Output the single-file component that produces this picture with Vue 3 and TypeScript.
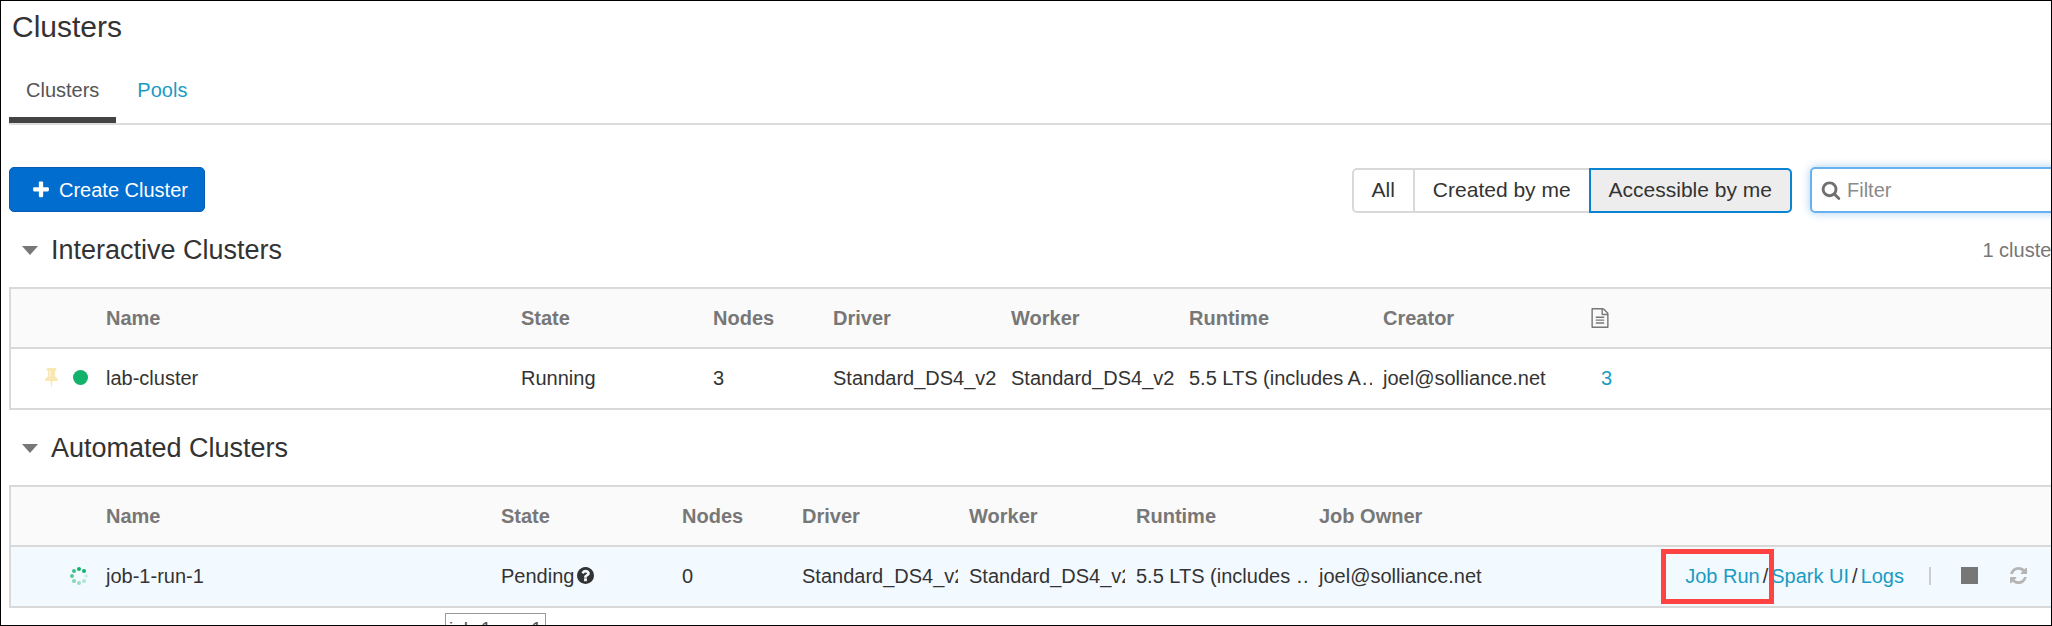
<script setup lang="ts">
import { ref } from 'vue'

interface Cluster {
  name: string
  state: string
  nodes: number
  driver: string
  worker: string
  runtime: string
  owner: string
}

const filters = ['All', 'Created by me', 'Accessible by me']
const activeFilter = ref('Accessible by me')
const query = ref('')

const interactiveHeads = ['Name', 'State', 'Nodes', 'Driver', 'Worker', 'Runtime', 'Creator']
const automatedHeads = ['Name', 'State', 'Nodes', 'Driver', 'Worker', 'Runtime', 'Job Owner']

const interactive: Cluster[] = [
  {
    name: 'lab-cluster',
    state: 'Running',
    nodes: 3,
    driver: 'Standard_DS4_v2',
    worker: 'Standard_DS4_v2',
    runtime: '5.5 LTS (includes A…',
    owner: 'joel@solliance.net',
  },
]

const automated: Cluster[] = [
  {
    name: 'job-1-run-1',
    state: 'Pending',
    nodes: 0,
    driver: 'Standard_DS4_v2',
    worker: 'Standard_DS4_v2',
    runtime: '5.5 LTS (includes …',
    owner: 'joel@solliance.net',
  },
]

const dots = [
  { x: 9, y: 2, o: 1 },
  { x: 14, y: 4, o: 1 },
  { x: 16, y: 9, o: 0.15 },
  { x: 14, y: 14, o: 0.3 },
  { x: 9, y: 16, o: 0.4 },
  { x: 4, y: 14, o: 0.5 },
  { x: 2, y: 9, o: 0.7 },
  { x: 4, y: 4, o: 0.8 },
]
</script>

<template>
  <div class="frame">
    <main class="content">
      <h1>Clusters</h1>

      <nav class="tabs">
        <a href="#clusters" class="tab current">Clusters</a>
        <a href="#pools" class="tab">Pools</a>
      </nav>

      <div class="toolbar">
        <button type="button" class="create">
          <svg viewBox="0 0 1792 1792" width="20" height="20" aria-hidden="true"><path d="M1600 736v192q0 40-28 68t-68 28h-416v416q0 40-28 68t-68 28h-192q-40 0-68-28t-28-68v-416h-416q-40 0-68-28t-28-68v-192q0-40 28-68t68-28h416v-416q0-40 28-68t68-28h192q40 0 68 28t28 68v416h416q40 0 68 28t28 68z" /></svg>
          Create Cluster
        </button>
        <div class="segments">
          <button
            v-for="f in filters"
            :key="f"
            type="button"
            class="segment"
            :class="{ active: f === activeFilter }"
            @click="activeFilter = f"
          >{{ f }}</button>
        </div>
        <label class="search">
          <svg viewBox="0 0 1792 1792" width="20" height="20" aria-hidden="true"><path d="M1216 832q0-185-131.5-316.5t-316.5-131.5-316.5 131.5-131.5 316.5 131.5 316.5 316.5 131.5 316.5-131.5 131.5-316.5zm512 832q0 52-38 90t-90 38q-54 0-90-38l-343-342q-179 124-399 124-143 0-273.5-55.5t-225-150-150-225-55.5-273.5 55.5-273.5 150-225 225-150 273.5-55.5 273.5 55.5 225 150 150 225 55.5 273.5q0 220-124 399l343 343q37 37 37 90z" /></svg>
          <input v-model="query" type="text" placeholder="Filter" aria-label="Filter" />
        </label>
      </div>

      <section>
        <div class="section-head">
          <h2><svg class="caret" viewBox="0 0 16 9" width="16" height="9" aria-hidden="true"><path d="M0 0h16L8 9z" /></svg>Interactive Clusters</h2>
          <span class="count">1 cluster</span>
        </div>
        <table class="interactive">
          <colgroup>
            <col class="c-icons" /><col class="c-name" /><col class="c-state" /><col class="c-nodes" />
            <col class="c-type" /><col class="c-type" /><col class="c-runtime" /><col class="c-owner" /><col />
          </colgroup>
          <thead>
            <tr>
              <td></td>
              <th v-for="h in interactiveHeads" :key="h" scope="col">{{ h }}</th>
              <th scope="col" aria-label="Notebooks" class="doc">
                <svg viewBox="0 0 1792 1792" width="20" height="20" aria-hidden="true"><path d="M1596 380q28 28 48 76t20 88v1152q0 40-28 68t-68 28h-1344q-40 0-68-28t-28-68v-1600q0-40 28-68t68-28h896q40 0 88 20t76 48zm-444-244v376h376q-10-29-22-41l-313-313q-12-12-41-22zm384 1528v-1024h-416q-40 0-68-28t-28-68v-416h-768v1536h1280zm-1024-864q0-14 9-23t23-9h704q14 0 23 9t9 23v64q0 14-9 23t-23 9h-704q-14 0-23-9t-9-23v-64zm736 224q14 0 23 9t9 23v64q0 14-9 23t-23 9h-704q-14 0-23-9t-9-23v-64q0-14 9-23t23-9h704zm0 256q14 0 23 9t9 23v64q0 14-9 23t-23 9h-704q-14 0-23-9t-9-23v-64q0-14 9-23t23-9h704z" /></svg>
              </th>
            </tr>
          </thead>
          <tbody>
            <tr v-for="c in interactive" :key="c.name">
              <td>
                <span class="icons">
                  <svg class="pin" viewBox="320 128 1152 1664" width="13" height="19" aria-hidden="true"><path d="M800 864v-448q0-14-9-23t-23-9-23 9-9 23v448q0 14 9 23t23 9 23-9 9-23zm672 352q0 26-19 45t-45 19h-429l-51 483q-2 12-10.5 20.5t-20.5 8.5h-1q-27 0-32-27l-76-485h-404q-26 0-45-19t-19-45q0-123 78.5-221.5t177.5-98.5v-512q-52 0-90-38t-38-90 38-90 90-38h640q52 0 90 38t38 90-38 90-90 38v512q99 0 177.5 98.5t78.5 221.5z" /></svg>
                  <i class="dot"></i>
                </span>
              </td>
              <td>{{ c.name }}</td>
              <td>{{ c.state }}</td>
              <td>{{ c.nodes }}</td>
              <td>{{ c.driver }}</td>
              <td>{{ c.worker }}</td>
              <td>{{ c.runtime }}</td>
              <td>{{ c.owner }}</td>
              <td class="notebooks"><a href="#notebooks">3</a></td>
            </tr>
          </tbody>
        </table>
      </section>

      <section>
        <div class="section-head">
          <h2><svg class="caret" viewBox="0 0 16 9" width="16" height="9" aria-hidden="true"><path d="M0 0h16L8 9z" /></svg>Automated Clusters</h2>
        </div>
        <table class="automated">
          <colgroup>
            <col class="c-icons" /><col class="c-name" /><col class="c-state" /><col class="c-nodes" />
            <col class="c-type" /><col class="c-type" /><col class="c-runtime" /><col class="c-owner" /><col />
          </colgroup>
          <thead>
            <tr>
              <td></td>
              <th v-for="h in automatedHeads" :key="h" scope="col">{{ h }}</th>
              <td></td>
            </tr>
          </thead>
          <tbody>
            <tr v-for="c in automated" :key="c.name" class="hovered">
              <td>
                <span class="icons">
                  <svg class="spinner" viewBox="0 0 18 18" width="18" height="18" role="img" aria-label="Pending">
                    <circle v-for="(d, i) in dots" :key="i" :cx="d.x" :cy="d.y" r="2" :opacity="d.o" />
                  </svg>
                </span>
              </td>
              <td>{{ c.name }}</td>
              <td>
                <span class="state">{{ c.state }}<svg viewBox="128 128 1536 1536" width="17" height="17" aria-hidden="true"><path d="M1024 1376v-192q0-14-9-23t-23-9h-192q-14 0-23 9t-9 23v192q0 14 9 23t23 9h192q14 0 23-9t9-23zm256-672q0-88-55.5-163t-138.5-116-170-41q-243 0-371 213-15 24 8 42l132 100q7 6 19 6 16 0 25-12 53-68 86-92 34-24 86-24 48 0 85.5 26t37.5 59q0 38-20 61t-68 45q-63 28-115.5 86.5t-52.5 125.5v36q0 14 9 23t23 9h192q14 0 23-9t9-23q0-19 21.5-49.5t54.5-49.5q32-18 49-28.5t46-35 44.5-48 28-60.5 12.5-81zm384 192q0 209-103 385.5t-279.5 279.5-385.5 103-385.5-103-279.5-279.5-103-385.5 103-385.5 279.5-279.5 385.5-103 385.5 103 279.5 279.5 103 385.5z" /></svg></span>
              </td>
              <td>{{ c.nodes }}</td>
              <td>{{ c.driver }}</td>
              <td>{{ c.worker }}</td>
              <td>{{ c.runtime }}</td>
              <td>{{ c.owner }}</td>
              <td class="action-cell">
                <div class="actions">
                  <span class="links">
                    <a href="#job-run" class="marked">Job Run</a><span>/</span><a href="#spark-ui">Spark UI</a><span>/</span><a href="#logs">Logs</a>
                  </span>
                  <span class="bar"></span>
                  <button type="button" class="icon-button" aria-label="Terminate"><i class="stop"></i></button>
                  <button type="button" class="icon-button restart" aria-label="Restart">
                    <svg viewBox="128 128 1536 1536" width="17" height="17" aria-hidden="true"><path d="M1639 1056q0 5-1 7-64 268-268 434.5t-478 166.5q-146 0-282.5-55t-243.5-157l-129 129q-19 19-45 19t-45-19-19-45v-448q0-26 19-45t45-19h448q26 0 45 19t19 45-19 45l-137 137q71 66 161 102t187 36q134 0 250-65t186-179q11-17 53-117 8-23 30-23h192q13 0 22.5 9.5t9.5 22.5zm25-800v448q0 26-19 45t-45 19h-448q-26 0-45-19t-19-45 19-45l138-138q-148-137-349-137-134 0-250 65t-186 179q-11 17-53 117-8 23-30 23h-199q-13 0-22.5-9.5t-9.5-22.5v-7q65-268 270-434.5t480-166.5q146 0 284 55.5t245 156.5l130-129q19-19 45-19t45 19 19 45z" /></svg>
                  </button>
                </div>
              </td>
            </tr>
          </tbody>
        </table>
        <div class="tooltip" role="tooltip">job-1-run-1</div>
      </section>
    </main>
  </div>
</template>

<style>
body {
  background: #fff;
}
</style>

<style scoped>
* {
  box-sizing: border-box;
}
.frame {
  height: 100vh;
  overflow: hidden;
  border: 1px solid #000;
  color: #333;
  font: 20px/24px "Liberation Sans", Arial, sans-serif;
}
.content {
  margin: 0 -9px 0 8px;
}
h1,
h2 {
  margin: 0;
  font-weight: 400;
}
h1 {
  padding: 8px 0 0 3px;
  font-size: 30px;
  line-height: 36px;
}
a {
  color: #1b9bc3;
  text-decoration: none;
}
svg {
  display: block;
  flex: none;
  fill: currentColor;
}
button,
input {
  font: inherit;
  color: inherit;
}
.tabs {
  display: flex;
  gap: 4px;
  margin-top: 24px;
  border-bottom: 2px solid #ddd;
}
.tab {
  padding: 9px 17px 15px;
  border-bottom: 6px solid transparent;
}
.tab.current {
  color: #555;
  border-bottom-color: #444;
}
.toolbar {
  display: flex;
  align-items: center;
  margin-top: 42px;
}
.create {
  display: flex;
  align-self: flex-start;
  align-items: center;
  gap: 8px;
  height: 45px;
  padding: 0 16px 0 21px;
  border: 1px solid #0a5bb5;
  border-radius: 5px;
  background: #006dcf;
  color: #fff;
}
.segments {
  display: flex;
  margin-left: auto;
  font-size: 21px;
}
.segment {
  height: 45px;
  margin-left: -2px;
  padding: 0 18px;
  border: 2px solid #d9d9d9;
  background: #fff;
}
.segment:first-child {
  border-radius: 5px 0 0 5px;
}
.segment:last-child {
  border-radius: 0 5px 5px 0;
}
.segment.active {
  border-color: #0b83d0;
  background: #ededed;
  z-index: 1;
}
.search {
  display: flex;
  align-items: center;
  gap: 6px;
  width: 250px;
  height: 46px;
  margin-left: 18px;
  padding-left: 9px;
  border: 2px solid #66b2f0;
  border-radius: 5px;
  box-shadow: 0 0 10px #a9cff5;
  color: #707070;
}
.search input {
  flex: 1;
  min-width: 0;
  padding: 0;
  border: 0;
  outline: 0;
  background: none;
}
.search input::placeholder {
  color: #8a8a8a;
}
section + section {
  margin-top: 1px;
}
.section-head {
  display: flex;
  align-items: center;
  justify-content: space-between;
  height: 74px;
}
h2 {
  display: flex;
  align-items: center;
  gap: 13px;
  padding-left: 13px;
  font-size: 27px;
  line-height: 32px;
}
.caret {
  color: #777;
}
.count {
  padding-right: 2px;
  color: #777;
}
table {
  width: 100%;
  table-layout: fixed;
  border-spacing: 0;
  border: 2px solid #d9d9d9;
}
th,
td {
  height: 59px;
  padding: 0 0 2px 11px;
  overflow: hidden;
  text-align: left;
  white-space: nowrap;
}
thead th,
thead td {
  height: 60px;
  padding-bottom: 0;
  border-bottom: 2px solid #d9d9d9;
  background: #fafafa;
  color: #777;
}
.c-icons { width: 84px; }
.interactive .c-name { width: 415px; }
.interactive .c-state { width: 192px; }
.interactive .c-nodes { width: 120px; }
.interactive .c-type { width: 178px; }
.interactive .c-runtime { width: 194px; }
.interactive .c-owner { width: 207px; }
.automated .c-name { width: 395px; }
.automated .c-state { width: 181px; }
.automated .c-nodes { width: 120px; }
.automated .c-type { width: 167px; }
.automated .c-runtime { width: 183px; }
.automated .c-owner { width: 207px; }
.notebooks {
  padding-left: 22px;
}
.icons {
  display: flex;
  align-items: center;
  justify-content: flex-end;
  gap: 15px;
  padding-right: 7px;
}
.pin {
  color: #fae8b4;
}
.dot {
  width: 15px;
  height: 15px;
  border-radius: 50%;
  background: #12b26b;
}
.spinner {
  color: #12b26b;
}
.hovered td {
  background: #f3faff;
}
.state {
  display: flex;
  align-items: center;
  gap: 3px;
}
td.action-cell {
  overflow: visible;
}
.actions {
  display: flex;
  align-items: center;
  justify-content: flex-end;
  padding-right: 31px;
}
.links {
  display: flex;
  gap: 3px;
}
.marked {
  position: relative;
}
.marked::after {
  content: "";
  position: absolute;
  inset: -15px -14px -16px -24px;
  border: 5px solid #ff4343;
}
.bar {
  width: 2px;
  height: 18px;
  margin: 0 30px 0 25px;
  background: #ccc;
}
.icon-button {
  display: flex;
  padding: 0;
  border: 0;
  background: none;
}
.stop {
  width: 17px;
  height: 17px;
  background: #777;
}
.restart {
  margin-left: 32px;
  color: #b5b5b5;
}
.tooltip {
  width: max-content;
  margin: 5px 0 0 436px;
  padding: 3px;
  border: 1px solid #999;
  background: #fff;
  color: #555;
  font-size: 19px;
}
</style>
